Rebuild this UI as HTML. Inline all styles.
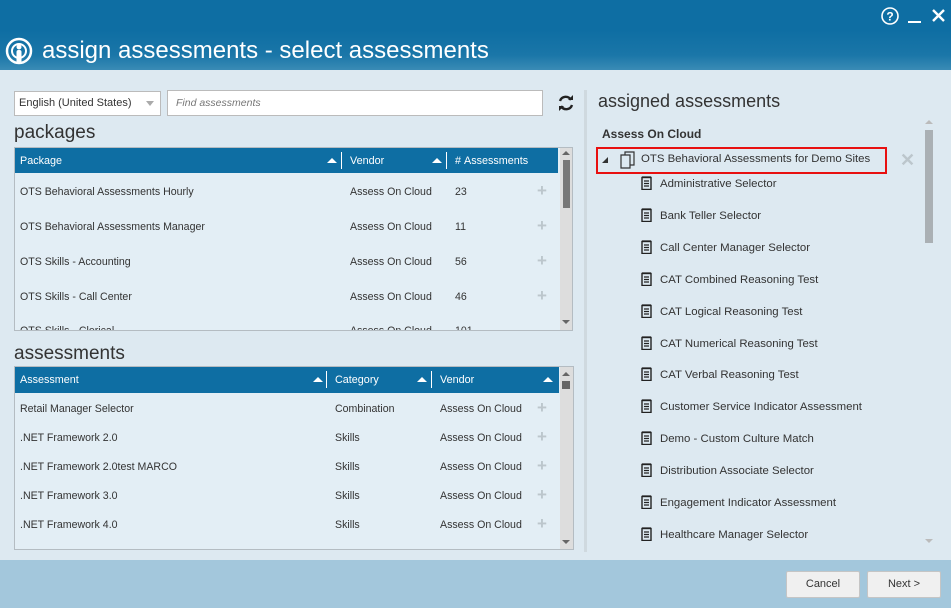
<!DOCTYPE html>
<html><head><meta charset="utf-8"><style>
*{box-sizing:border-box;margin:0;padding:0}
body{width:951px;height:608px;overflow:hidden;font-family:"Liberation Sans",sans-serif;background:#dde9f1;position:relative;font-size:11px;color:#333}
.abs{position:absolute}
#top{left:0;top:0;width:951px;height:70px;background:linear-gradient(#0e6ea3 0,#0e6ea3 30px,#1a76a8 55px,#3a8bb5 70px)}
.title{left:42px;top:37px;color:#fff;font-size:24px;white-space:nowrap}
.h2{font-size:19px;color:#333;white-space:nowrap}
.tbl{border:1px solid #b4bcc2;background:rgba(230,240,246,.7)}
.th{background:#0e6ea3;color:#fff;height:25px;position:absolute;top:0;font-size:10.8px}
.th span{position:absolute;top:7px}
.tri{position:absolute;top:10px;width:0;height:0;border-left:5px solid transparent;border-right:5px solid transparent;border-bottom:5px solid #fff}
.sep{position:absolute;top:4px;width:1px;height:17px;background:#fff}
.cell{position:absolute;white-space:nowrap;font-size:10.6px;color:#333}
.plus{position:absolute;color:#bcc6cc;font-size:17px;font-weight:bold}
.sb{position:absolute;background:#ddd}
.item{position:absolute;left:660px;white-space:nowrap;font-size:11.4px;color:#333}
.ic{position:absolute;left:-19px;top:-2px}
.btn{position:absolute;top:571px;height:27px;background:#f0f0f0;border:1px solid #c5c5c5;border-radius:2px;font-size:11px;text-align:center;line-height:25px;color:#333}
</style></head><body>
<div id="top" class="abs"></div>
<svg class="abs" style="left:4px;top:36px" width="30" height="30" viewBox="0 0 30 30"><circle cx="15" cy="15" r="12" fill="none" stroke="#fff" stroke-width="2.5"/><circle cx="15" cy="15" r="7" fill="none" stroke="#fff" stroke-width="2"/><circle cx="15" cy="11" r="2.5" fill="#fff"/><rect x="12.5" y="14" width="5" height="13" rx="2" fill="#fff"/></svg>
<div class="abs title">assign assessments - select assessments</div>
<svg class="abs" style="left:880px;top:6px" width="66" height="20"><circle cx="10" cy="10" r="8" fill="none" stroke="#fff" stroke-width="1.6"/><text x="10" y="14.5" font-size="12" font-weight="bold" fill="#fff" text-anchor="middle" font-family="Liberation Sans">?</text><rect x="28" y="15" width="13" height="2" fill="#fff"/><path d="M53 4L64 15M64 4L53 15" stroke="#fff" stroke-width="2.4"/></svg>

<div class="abs" style="left:14px;top:91px;width:147px;height:25px;background:#fff;border:1px solid #bbb"></div>
<div class="abs cell" style="left:19px;top:97px;font-size:11px">English (United States)</div>
<div class="abs" style="left:146px;top:101px;border-left:4px solid transparent;border-right:4px solid transparent;border-top:5px solid #aaa"></div>
<div class="abs" style="left:167px;top:90px;width:376px;height:26px;background:#fff;border:1px solid #bbb"></div>
<div class="abs cell" style="left:176px;top:97px;font-style:italic;color:#777;font-size:10.5px">Find assessments</div>
<svg class="abs" style="left:556px;top:93px" width="20" height="20" viewBox="0 0 20 20"><path d="M15 7A6 6 0 0 0 4 8M5 13A6 6 0 0 0 16 12" fill="none" stroke="#222" stroke-width="2.4"/><path d="M12 7h5V2z M8 13H3v5z" fill="#222"/></svg>

<div class="abs h2" style="left:14px;top:122px">packages</div>
<div class="abs tbl" style="left:14px;top:147px;width:559px;height:184px"></div>
<div class="th" style="left:15px;top:148px;width:543px">
<span style="left:5px">Package</span><div class="tri" style="left:312px"></div><div class="sep" style="left:326px"></div>
<span style="left:335px">Vendor</span><div class="tri" style="left:417px"></div><div class="sep" style="left:431px"></div>
<span style="left:440px">#&nbsp;Assessments</span></div>
<div class="sb" style="left:560px;top:148px;width:12px;height:182px"></div>
<div class="abs" style="left:563px;top:160px;width:7px;height:48px;background:#777"></div>
<div class="abs" style="left:562px;top:151px;border-left:4px solid transparent;border-right:4px solid transparent;border-bottom:4px solid #666"></div>
<div class="abs" style="left:562px;top:320px;border-left:4px solid transparent;border-right:4px solid transparent;border-top:4px solid #666"></div>
<div class="cell" style="left:20px;top:186px">OTS Behavioral Assessments Hourly</div><div class="cell" style="left:350px;top:186px">Assess On Cloud</div><div class="cell" style="left:455px;top:186px">23</div><div class="plus" style="left:537px;top:181px">+</div>
<div class="cell" style="left:20px;top:221px">OTS Behavioral Assessments Manager</div><div class="cell" style="left:350px;top:221px">Assess On Cloud</div><div class="cell" style="left:455px;top:221px">11</div><div class="plus" style="left:537px;top:216px">+</div>
<div class="cell" style="left:20px;top:256px">OTS Skills - Accounting</div><div class="cell" style="left:350px;top:256px">Assess On Cloud</div><div class="cell" style="left:455px;top:256px">56</div><div class="plus" style="left:537px;top:251px">+</div>
<div class="cell" style="left:20px;top:291px">OTS Skills - Call Center</div><div class="cell" style="left:350px;top:291px">Assess On Cloud</div><div class="cell" style="left:455px;top:291px">46</div><div class="plus" style="left:537px;top:286px">+</div>
<div class="abs" style="left:15px;top:326px;width:544px;height:4px;overflow:hidden"><div class="cell" style="left:5px;top:-1px">OTS Skills - Clerical</div><div class="cell" style="left:335px;top:-1px">Assess On Cloud</div><div class="cell" style="left:440px;top:-1px">101</div></div>

<div class="abs h2" style="left:14px;top:343px">assessments</div>
<div class="abs tbl" style="left:14px;top:366px;width:560px;height:184px"></div>
<div class="th" style="left:15px;top:367px;width:544px;height:26px">
<span style="left:5px">Assessment</span><div class="tri" style="left:298px"></div><div class="sep" style="left:311px"></div>
<span style="left:320px">Category</span><div class="tri" style="left:402px"></div><div class="sep" style="left:416px"></div>
<span style="left:425px">Vendor</span><div class="tri" style="left:528px"></div></div>
<div class="sb" style="left:560px;top:367px;width:13px;height:182px"></div>
<div class="abs" style="left:562px;top:381px;width:8px;height:8px;background:#666"></div>
<div class="abs" style="left:562px;top:372px;border-left:4px solid transparent;border-right:4px solid transparent;border-bottom:4px solid #666"></div>
<div class="abs" style="left:562px;top:540px;border-left:4px solid transparent;border-right:4px solid transparent;border-top:4px solid #666"></div>
<div class="cell" style="left:20px;top:403px">Retail Manager Selector</div><div class="cell" style="left:335px;top:403px">Combination</div><div class="cell" style="left:440px;top:403px">Assess On Cloud</div><div class="plus" style="left:537px;top:398px">+</div>
<div class="cell" style="left:20px;top:432px">.NET Framework 2.0</div><div class="cell" style="left:335px;top:432px">Skills</div><div class="cell" style="left:440px;top:432px">Assess On Cloud</div><div class="plus" style="left:537px;top:427px">+</div>
<div class="cell" style="left:20px;top:461px">.NET Framework 2.0test MARCO</div><div class="cell" style="left:335px;top:461px">Skills</div><div class="cell" style="left:440px;top:461px">Assess On Cloud</div><div class="plus" style="left:537px;top:456px">+</div>
<div class="cell" style="left:20px;top:490px">.NET Framework 3.0</div><div class="cell" style="left:335px;top:490px">Skills</div><div class="cell" style="left:440px;top:490px">Assess On Cloud</div><div class="plus" style="left:537px;top:485px">+</div>
<div class="cell" style="left:20px;top:519px">.NET Framework 4.0</div><div class="cell" style="left:335px;top:519px">Skills</div><div class="cell" style="left:440px;top:519px">Assess On Cloud</div><div class="plus" style="left:537px;top:514px">+</div>

<div class="abs" style="left:584px;top:90px;width:3px;height:462px;background:#cfd9df"></div>
<div class="abs h2" style="left:598px;top:91px;font-size:18px">assigned assessments</div>
<div class="abs" style="left:602px;top:127px;font-weight:bold;font-size:12px">Assess On Cloud</div>
<div class="abs" style="left:596px;top:147px;width:291px;height:27px;border:2px solid #e81010"></div>
<div class="abs" style="left:602px;top:157px;border-left:6px solid transparent;border-bottom:6px solid #333"></div>
<svg class="abs" style="left:620px;top:151px" width="16" height="18" viewBox="0 0 16 18"><path d="M1 4h9v13H1z M5 4V1h9v13h-4" fill="none" stroke="#333" stroke-width="1.2"/></svg>
<div class="cell" style="left:641px;top:153px;font-size:11.4px">OTS Behavioral Assessments for Demo Sites</div>
<div class="abs" style="left:900px;top:150px;font-size:18px;font-weight:bold;color:#bcc6cc">✕</div>
<div class="abs" style="left:925px;top:130px;width:8px;height:113px;background:#aab0b4"></div>
<div class="abs" style="left:925px;top:120px;border-left:4px solid transparent;border-right:4px solid transparent;border-bottom:4px solid #bbb"></div>
<div class="abs" style="left:925px;top:539px;border-left:4px solid transparent;border-right:4px solid transparent;border-top:4px solid #bbb"></div>

<div id="items"></div>
<script>
var n=["Administrative Selector","Bank Teller Selector","Call Center Manager Selector","CAT Combined Reasoning Test","CAT Logical Reasoning Test","CAT Numerical Reasoning Test","CAT Verbal Reasoning Test","Customer Service Indicator Assessment","Demo - Custom Culture Match","Distribution Associate Selector","Engagement Indicator Assessment","Healthcare Manager Selector"];
var h="";n.forEach(function(t,i){var y=178+i*31.9;h+='<div class="item" style="top:'+y+'px"><svg class="ic" width="11" height="14" viewBox="0 0 11 14"><rect x="1" y="1.5" width="9" height="12" fill="none" stroke="#222" stroke-width="1.4"/><path d="M1 1h9M3 5h5M3 7.5h5M3 10h5" stroke="#222" stroke-width="1.2"/></svg>'+t+'</div>';});
document.getElementById("items").innerHTML=h;
</script>

<div class="abs" style="left:0;top:560px;width:951px;height:48px;background:#a3c7dc"></div>
<div class="btn" style="left:786px;width:74px">Cancel</div>
<div class="btn" style="left:867px;width:74px">Next &gt;</div>
</body></html>
